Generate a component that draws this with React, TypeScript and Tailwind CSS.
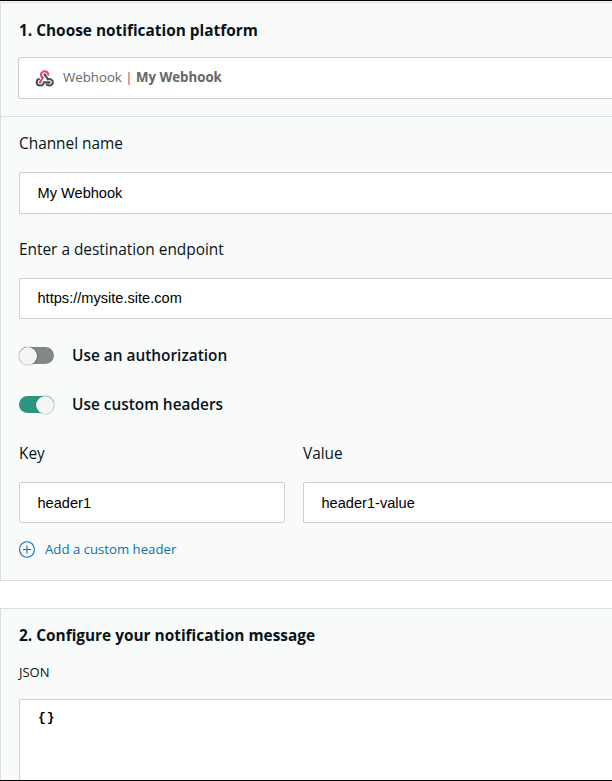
import type { ReactNode } from "react";

function WebhookIcon() {
  return (
    <svg width="19" height="17" viewBox="0 0 19 17" fill="none" strokeWidth="2.1" strokeLinecap="round" className="mt-px shrink-0">
      <path stroke="#465157" d="M9.9 4.6 12.8 9.2C15.1 8.5 17.9 10 17.9 12.3C17.9 15.4 13.8 16.2 11.8 14.7" />
      <path stroke="#465157" d="M14.2 12.4H9C8.6 14.4 7 15.6 5.1 15.5C3 15.4 1.7 13.9 1.7 12.2C1.7 10.8 2.6 9.6 3.9 9.1" />
      <path stroke="#f43d6b" d="M5.1 12.3 7.8 7.7C5.8 6.4 5.5 4.2 6.8 2.6C8.8.2 13.1 1.2 13.3 4.8" />
      <circle cx="9.9" cy="4.6" r="1.2" fill="#465157" />
      <circle cx="5.1" cy="12.3" r="1.2" fill="#f43d6b" />
      <circle cx="14.2" cy="12.4" r="1.2" fill="#465157" />
    </svg>
  );
}

function Label({ children }: { children: ReactNode }) {
  return <div className="h-[22px] text-[15.4px] leading-[24px] text-[#06141a]">{children}</div>;
}

function Field({ value, className }: { value: string; className: string }) {
  return (
    <div className={`flex items-center border border-[#cdd0d0] bg-white pl-[17.5px] font-['Liberation_Sans',Arial,sans-serif] text-[14.6px] text-black ${className}`}>
      {value}
    </div>
  );
}

function Toggle({ on, label }: { on: boolean; label: string }) {
  return (
    <div className="flex h-[22px] items-center">
      <div className={`mt-px flex h-[17px] w-[35px] items-center rounded-full ${on ? "justify-end bg-[#2d9681]" : "justify-start bg-[#838887]"}`}>
        <div className={`size-[18px] shrink-0 rounded-full bg-[#f4f5f5] shadow-[0_0_1.5px_rgba(0,0,0,0.55)] ${on ? "" : "-ml-[0.5px]"}`} />
      </div>
      <span className="ml-[18px] h-[22px] text-[15.4px] font-semibold leading-[24px] text-[#06141a]">{label}</span>
    </div>
  );
}

export default function App() {
  return (
    <div className="flex h-[781px] w-[612px] flex-col overflow-hidden border-y border-black bg-white font-['Open_Sans','Noto_Sans',sans-serif] whitespace-nowrap">
      <section className="mt-px h-[579px] shrink-0 border-y border-l border-[#dcdfdf] bg-[#f9fbfa]">
        <div className="h-[114px] border-b border-[#dcdfdf] pl-[17px] pt-[16px]">
          <h2 className="ml-px h-[22px] text-[15.4px] font-bold leading-[24px] text-[#06141a]">1. Choose notification platform</h2>
          <div className="mt-4 flex h-[42px] items-center rounded-l-[3px] border border-r-0 border-[#cdd0d0] bg-white pl-4 text-[13.25px] text-[#62686b]">
            <WebhookIcon />
            <span className="ml-[9px]">
              Webhook | <b>My Webhook</b>
            </span>
          </div>
        </div>
        <div className="pl-[18px] pt-[15px]">
          <Label>Channel name</Label>
          <Field value="My Webhook" className="mt-[18px] h-[42px] rounded-l-[2px] border-r-0 pt-[2px]" />
          <div className="mt-[24px]">
            <Label>Enter a destination endpoint</Label>
          </div>
          <Field value="https://mysite.site.com" className="mt-[18px] h-[41px] rounded-l-[2px] border-r-0" />
          <div className="mt-[25px] flex flex-col gap-[27px]">
            <Toggle on={false} label="Use an authorization" />
            <Toggle on label="Use custom headers" />
          </div>
          <div className="mt-[27px] grid grid-cols-[266px_1fr] gap-x-[18px]">
            <Label>Key</Label>
            <Label>Value</Label>
            <Field value="header1" className="mt-[18px] h-[41px] rounded-[2px] pt-[2px]" />
            <Field value="header1-value" className="mt-[18px] h-[41px] rounded-l-[2px] border-r-0 pt-[2px]" />
          </div>
          <div className="mt-[16px] flex h-[20px] items-center text-[13.2px] leading-[20px] text-[#0b70ad]">
            <svg width="16" height="17" viewBox="0 0 16 17" fill="none" stroke="currentColor" strokeWidth="1.1">
              <ellipse cx="8" cy="8.5" rx="7.4" ry="7.8" />
              <path d="M8 4.5v8M4 8.5h8" />
            </svg>
            <span className="ml-[10px]">Add a custom header</span>
          </div>
        </div>
      </section>
      <section className="mt-[27px] grow border-l border-t border-[#dcdfdf] bg-[#f9fbfa] pl-[18px] pt-[15px]">
        <h2 className="h-[22px] text-[15.4px] font-bold leading-[24px] text-[#06141a]">2. Configure your notification message</h2>
        <div className="mt-[17px] h-[18px] text-[13px] leading-[18px] text-[#06141a]">JSON</div>
        <div className="mt-[18px] h-[100px] rounded-tl-[2px] border-l border-t border-[#cdd0d0] bg-white pl-[18px] pt-[9px] font-['Liberation_Mono',monospace] text-[13px] font-bold leading-[18px] tracking-[1px] text-black">
          {"{}"}
        </div>
      </section>
    </div>
  );
}
